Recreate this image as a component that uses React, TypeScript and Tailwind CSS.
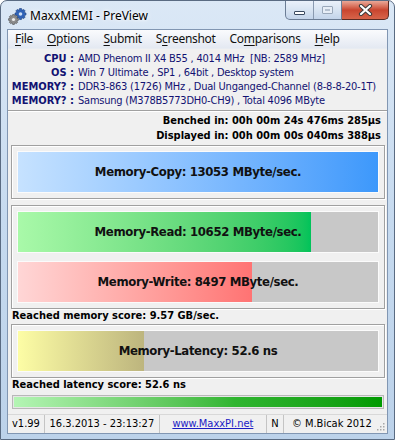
import React from "react"

const tahoma = { fontFamily: '"DejaVu Sans Condensed", "Liberation Sans", sans-serif' }

const gearPoints = (cx: number, cy: number, ro: number, ri: number, teeth: number) => {
  const pts: string[] = []
  const step = (Math.PI * 2) / teeth
  for (let i = 0; i < teeth; i++) {
    const a = i * step
    const seq = [
      [ri, a - step * 0.5],
      [ro, a - step * 0.22],
      [ro, a + step * 0.22],
      [ri, a + step * 0.5]
    ]
    seq.forEach(([r, ang]) => pts.push(`${(cx + r * Math.cos(ang)).toFixed(2)},${(cy + r * Math.sin(ang)).toFixed(2)}`))
  }
  return pts.join(" ")
}

const GearsIcon = () => (
  <svg width="19" height="17" viewBox="0 0 19 17">
    <polygon points={gearPoints(12.5, 6, 5.6, 4, 8)} fill="#2f62b8" stroke="#1d3f7c" strokeWidth="0.6" />
    <circle cx="12.5" cy="6" r="1.8" fill="#cfe0f5" />
    <polygon points={gearPoints(5.5, 11.5, 5, 3.6, 8)} fill="#8e8e8e" stroke="#4a4a4a" strokeWidth="0.6" />
    <circle cx="5.5" cy="11.5" r="1.6" fill="#eeeeee" />
  </svg>
)

const CaptionButtons = () => (
  <div className="flex h-[19px]">
    <div className="flex overflow-hidden rounded-bl-[5px] border border-t-0 border-[#6b7d95] bg-gradient-to-b from-[#eaf1fa] via-[#d8e4f2] to-[#c3d4ea]">
      <div className="flex w-[27px] items-end justify-center pb-[4px]">
        <div className="h-[4px] w-[11px] rounded-[1px] border border-[#3a4a60] bg-white" />
      </div>
      <div className="flex w-[28px] items-center justify-center border-l border-[#8a9ab0]">
        <div className="h-[8px] w-[11px] rounded-[1px] border border-[#9aa8ba] bg-[#e6edf6]">
          <div className="m-[2px] h-[2px] border border-[#b4c0cf]" />
        </div>
      </div>
    </div>
    <div className="relative flex w-[47px] items-center justify-center rounded-br-[5px] border border-l-0 border-t-0 border-[#5b2a22] bg-gradient-to-b from-[#e9a898] via-[#c9452f] to-[#d7644a]">
      <svg width="15" height="12" viewBox="0 0 15 12">
        <path d="M3 2 L12 10 M12 2 L3 10" stroke="#3b3b3b" strokeWidth="4.2" strokeLinecap="round" />
        <path d="M3 2 L12 10 M12 2 L3 10" stroke="#ffffff" strokeWidth="2.2" strokeLinecap="round" />
      </svg>
    </div>
  </div>
)

const MenuItem = ({ pre, u, post }: { pre: string; u: string; post: string }) => (
  <span className="px-[7px]">
    {pre}
    <span className="underline underline-offset-2">{u}</span>
    {post}
  </span>
)

const InfoRow = ({ label, value }: { label: string; value: string }) => (
  <div className="flex h-[14px] items-center text-[#121272]">
    <div className="w-[66px] shrink-0 text-right font-bold">{label}</div>
    <div className="ml-[4px] whitespace-pre tracking-[-0.22px]">{value}</div>
  </div>
)

const Bar = ({
  text,
  fill,
  pct
}: {
  text: string
  fill: string
  pct?: number
}) => (
  <div className="relative h-[42px] border border-[#fbfbfb] bg-[#c8c8c8]">
    <div
      className={`h-full ${fill}`}
      style={{ width: pct ? `${pct}%` : "100%" }}
    />
    <div className="absolute inset-0 flex items-center justify-center text-[13px] font-bold tracking-[-0.35px] text-[#111]">
      {text}
    </div>
  </div>
)

const Group = ({ children }: { children: React.ReactNode }) => (
  <div className="ml-[3px] mr-[2px] border border-[#a0a0a0] shadow-[inset_1px_1px_0_#ffffff,1px_1px_0_#ffffff]">
    <div className="flex flex-col gap-[8px] p-[5px]">{children}</div>
  </div>
)

export default function App() {
  return (
    <div className="h-[440px] w-[395px] bg-white">
      <div className="flex h-full w-full flex-col rounded-t-[7px] border border-[#5a6b82] bg-gradient-to-b from-[#dbe8f6] via-[#c6daef] to-[#bcd2ea]">
        {/* title bar */}
        <div className="flex h-[28px] items-start justify-between pl-[7px] pr-[5px]">
          <div className="flex items-center gap-[3px] pt-[6px]">
            <GearsIcon />
            <span
              className="text-[12px] text-black"
              style={{ fontFamily: '"Noto Sans", "Open Sans", sans-serif', textShadow: "0 0 6px #ffffff, 0 0 3px #ffffff" }}
            >
              MaxxMEMI - PreView
            </span>
          </div>
          <CaptionButtons />
        </div>

        {/* client */}
        <div
          className="mx-[6px] mb-[5px] flex flex-1 flex-col border border-[#8196b2] bg-[#f0f0f0] text-[11px] text-black"
          style={tahoma}
        >
          <div
            className="flex h-[19px] items-center border-b border-[#e8ecf2] bg-gradient-to-b from-[#fafbfd] to-[#e4e9f2] text-[12px] tracking-[-0.3px] text-[#111]"
            style={{ fontFamily: '"Noto Sans", "Open Sans", sans-serif' }}
          >
            <MenuItem pre="" u="F" post="ile" />
            <MenuItem pre="" u="O" post="ptions" />
            <MenuItem pre="" u="S" post="ubmit" />
            <MenuItem pre="S" u="c" post="reenshot" />
            <MenuItem pre="Co" u="m" post="parisons" />
            <MenuItem pre="" u="H" post="elp" />
          </div>

          <div className="pb-[2px] pt-[3px]">
            <InfoRow label="CPU :" value="AMD Phenom II X4 B55 , 4014 MHz  [NB: 2589 MHz]" />
            <InfoRow label="OS :" value="Win 7 Ultimate , SP1 , 64bit , Desktop system" />
            <InfoRow label="MEMORY? :" value="DDR3-863 (1726) MHz , Dual Unganged-Channel (8-8-8-20-1T)" />
            <InfoRow label="MEMORY? :" value="Samsung (M378B5773DH0-CH9) , Total 4096 MByte" />
          </div>
          <div className="border-b border-t border-b-white border-t-[#a0a0a0]" />

          <div className="flex flex-col items-end pr-[6px] pt-[2px] font-bold">
            <div className="flex h-[15px] items-center">Benched in: 00h 00m 24s 476ms 285µs</div>
            <div className="flex h-[15px] items-center">Displayed in: 00h 00m 00s 040ms 388µs</div>
          </div>

          <div className="mt-[1px]">
            <Group>
              <Bar text="Memory-Copy: 13053 MByte/sec." fill="bg-gradient-to-r from-[#c6e2ff] to-[#3c98fb]" />
            </Group>
          </div>

          <div className="mt-[6px]">
            <Group>
              <Bar text="Memory-Read: 10652 MByte/sec." fill="bg-gradient-to-r from-[#a9f9a9] to-[#00c35a]" pct={81.3} />
              <Bar text="Memory-Write: 8497 MByte/sec." fill="bg-gradient-to-r from-[#ffd6d6] to-[#ff7373]" pct={65} />
            </Group>
          </div>

          <div className="flex h-[15px] items-center pl-[4px] font-bold">Reached memory score: 9.57 GB/sec.</div>

          <Group>
            <Bar text="Memory-Latency: 52.6 ns" fill="bg-gradient-to-r from-[#fdfda5] to-[#bdb57e]" pct={35} />
          </Group>

          <div className="flex h-[15px] items-center pl-[4px] font-bold">Reached latency score: 52.6 ns</div>

          <div className="ml-[4px] mr-[3px] mt-[2px] h-[14px] border border-[#b8b8b8] bg-[#e6e6e6] p-[1px]">
            <div className="h-full bg-gradient-to-r from-[#b4f5b4] via-[#2fb52f] via-60% to-[#009a00]" />
          </div>

          <div className="mt-auto flex h-[19px] items-stretch border-t border-[#d8d8d8] text-[11px]">
            <div className="flex items-center border-r border-[#c4c4c4] px-[4px]">v1.99</div>
            <div className="flex w-[115px] items-center justify-center border-r border-[#c4c4c4]">16.3.2013 - 23:13:27</div>
            <div className="flex w-[107px] items-center justify-center border-r border-[#c4c4c4]">
              <span className="text-[#1c1cc4] underline">www.MaxxPI.net</span>
            </div>
            <div className="flex w-[17px] items-center justify-center border-r border-[#c4c4c4]">N</div>
            <div className="flex flex-1 items-center pl-[8px]">© M.Bicak 2012</div>
            <div className="flex items-end pb-[2px] pr-[2px]">
              <svg width="10" height="10" viewBox="0 0 10 10">
                {[
                  [8, 2],
                  [5, 5],
                  [8, 5],
                  [2, 8],
                  [5, 8],
                  [8, 8]
                ].map(([x, y]) => (
                  <rect key={`${x}-${y}`} x={x} y={y} width="1.5" height="1.5" fill="#a8a8a8" />
                ))}
              </svg>
            </div>
          </div>
        </div>
      </div>
    </div>
  )
}
